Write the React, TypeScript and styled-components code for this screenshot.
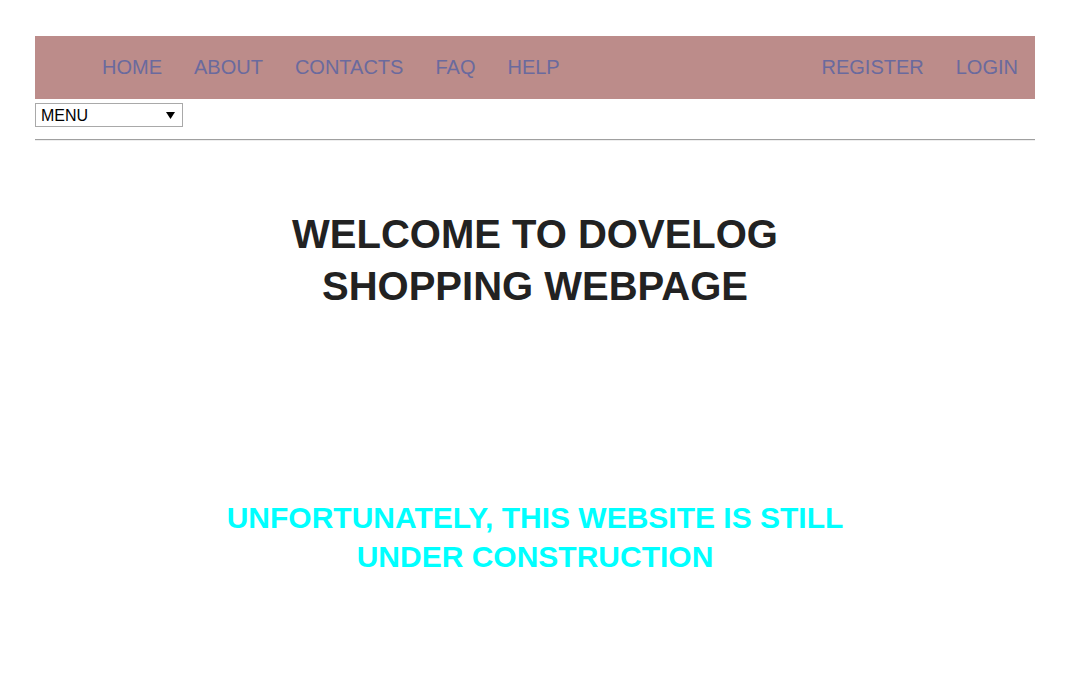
import React from 'react'
import styled, { createGlobalStyle } from 'styled-components'

const GlobalStyle = createGlobalStyle`
  body {
    margin: 0;
    background: #ffffff;
    font-family: 'Liberation Sans', Arial, sans-serif;
  }
`

const leftLinks = ['HOME', 'ABOUT', 'CONTACTS', 'FAQ', 'HELP']
const rightLinks = ['REGISTER', 'LOGIN']

export default function App() {
  return (
    <>
      <GlobalStyle />
      <StyledPage>
        <NavBar>
          <NavGroup>
            {leftLinks.map((link) => (
              <NavLink key={link} href="#">
                {link}
              </NavLink>
            ))}
          </NavGroup>
          <NavGroup>
            {rightLinks.map((link) => (
              <NavLink key={link} href="#">
                {link}
              </NavLink>
            ))}
          </NavGroup>
        </NavBar>

        <SelectWrap>
          <MenuSelect defaultValue="menu">
            <option value="menu">MENU</option>
            <option value="shop">SHOP</option>
            <option value="cart">CART</option>
          </MenuSelect>
          <SelectArrow width="9" height="7" viewBox="0 0 9 7">
            <path d="M0 0 H9 L4.5 7 Z" fill="#000" />
          </SelectArrow>
        </SelectWrap>

        <Divider />

        <Content>
          <Title>WELCOME TO DOVELOG SHOPPING WEBPAGE</Title>
          <Notice>UNFORTUNATELY, THIS WEBSITE IS STILL UNDER CONSTRUCTION</Notice>
        </Content>
      </StyledPage>
    </>
  )
}

const StyledPage = styled.div`
  width: 1000px;
  margin: 36px 0 0 35px;
  display: flex;
  flex-direction: column;
`

const NavBar = styled.nav`
  height: 63px;
  background: #bc8c8a;
  display: flex;
  align-items: center;
  justify-content: space-between;
  padding: 0 1px 0 51px;
`

const NavGroup = styled.div`
  display: flex;
  align-items: center;
  margin-top: -1px;
`

const NavLink = styled.a`
  padding: 0 16px;
  font-size: 20px;
  color: #6a6a9e;
  text-decoration: none;
`

const SelectWrap = styled.div`
  position: relative;
  width: 148px;
  margin-top: 4px;
`

const MenuSelect = styled.select`
  appearance: none;
  width: 148px;
  height: 24px;
  box-sizing: border-box;
  border: 1px solid #a9a9a9;
  border-radius: 0;
  background: #ffffff;
  padding: 0 0 0 5px;
  font-family: 'Liberation Sans', Arial, sans-serif;
  font-size: 16px;
  color: #000;
  outline: none;
`

const SelectArrow = styled.svg`
  position: absolute;
  right: 8px;
  top: 9px;
  pointer-events: none;
`

const Divider = styled.hr`
  width: 100%;
  margin: 12px 0 0;
  border: none;
  border-top: 1px solid #a0a0a0;
  border-bottom: 1px solid #eeeeee;
`

const Content = styled.main`
  width: 650px;
  margin: 0 auto;
  display: flex;
  flex-direction: column;
  align-items: center;
  text-align: center;
`

const Title = styled.h1`
  margin: 67px 0 0;
  font-size: 40px;
  line-height: 52px;
  font-weight: bold;
  color: #222222;
`

const Notice = styled.h2`
  margin: 186px 0 0;
  font-size: 30px;
  line-height: 39px;
  font-weight: bold;
  color: #00ffff;
`
